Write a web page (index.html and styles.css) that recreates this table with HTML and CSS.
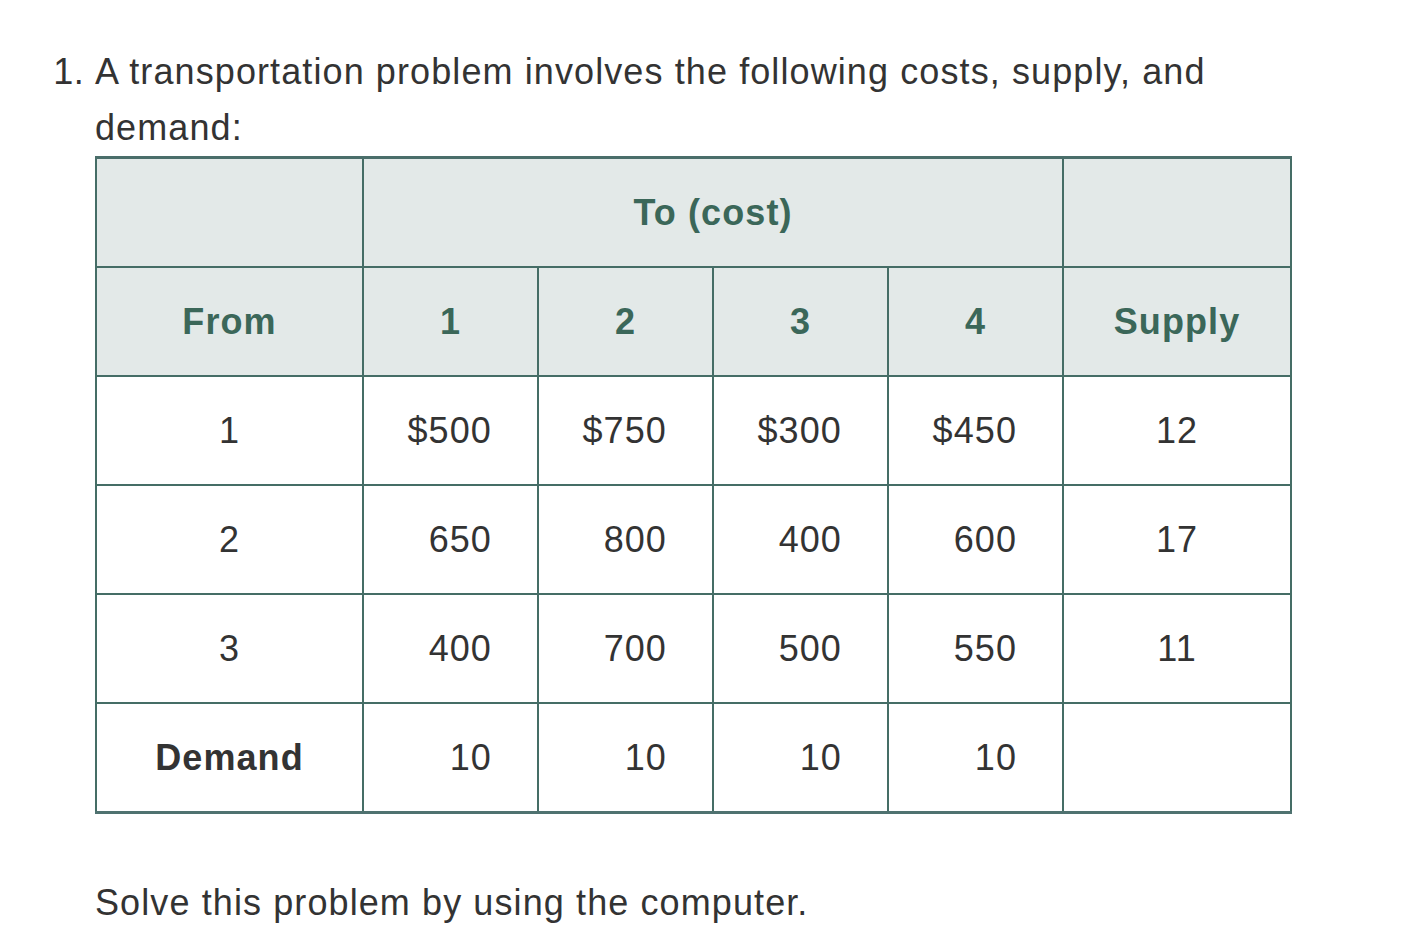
FILE: index.html
```html
<!DOCTYPE html>
<html>
<head>
<meta charset="utf-8">
<link rel="stylesheet" href="styles.css">
</head>
<body>
<ol class="problems">
  <li class="problem">
    <p class="question">A transportation problem involves the following costs, supply, and demand:</p>
    <table class="tp">
      <colgroup>
        <col class="c-from"><col class="c-cost"><col class="c-cost"><col class="c-cost"><col class="c-cost"><col class="c-supply">
      </colgroup>
      <thead>
        <tr class="hd">
          <th></th>
          <th colspan="4">To (cost)</th>
          <th></th>
        </tr>
        <tr class="hd">
          <th>From</th>
          <th>1</th><th>2</th><th>3</th><th>4</th>
          <th>Supply</th>
        </tr>
      </thead>
      <tbody>
        <tr><td class="lbl">1</td><td class="num">$500</td><td class="num">$750</td><td class="num">$300</td><td class="num">$450</td><td class="sup">12</td></tr>
        <tr><td class="lbl">2</td><td class="num">650</td><td class="num">800</td><td class="num">400</td><td class="num">600</td><td class="sup">17</td></tr>
        <tr><td class="lbl">3</td><td class="num">400</td><td class="num">700</td><td class="num">500</td><td class="num">550</td><td class="sup">11</td></tr>
        <tr class="last"><td class="lbl strong">Demand</td><td class="num">10</td><td class="num">10</td><td class="num">10</td><td class="num">10</td><td class="sup"></td></tr>
      </tbody>
    </table>
    <p class="after">Solve this problem by using the computer.</p>
  </li>
</ol>
</body>
</html>
```

FILE: styles.css
```css
html, body {
  margin: 0;
  padding: 0;
  background: #ffffff;
}
body {
  font-family: "Liberation Sans", Arial, Helvetica, sans-serif;
  font-size: 36px;
  letter-spacing: 1.1px;
  color: #333333;
}
.problems {
  margin: 0;
  padding: 44px 0 0 95px;
  width: 1196px;
}
.problem {
  line-height: 56px;
}
.problem::marker {
  letter-spacing: 0.6px;
}
.question {
  margin: 0;
  width: 1196px;
}
.tp {
  border-collapse: collapse;
  table-layout: fixed;
  width: 1196px;
  margin-top: 0;
  line-height: 40px;
  border-top: 3px solid #4a6e6a;
  border-bottom: 3px solid #4f7270;
  border-left: 2px solid #4a6e6a;
  border-right: 2px solid #4a6e6a;
}
.c-from { width: 267px; }
.c-cost { width: 175px; }
.c-supply { width: 228px; }
.tp th, .tp td {
  border: 2px solid #456d66;
  height: 107px;
  padding: 0;
  vertical-align: middle;
}
.tp th {
  background: #e3e9e8;
  color: #3b6759;
  font-weight: bold;
  text-align: center;
}
.tp td.lbl {
  text-align: center;
}
.tp td.strong {
  font-weight: bold;
}
.tp td.num {
  text-align: right;
  padding-right: 45px;
}
.tp td.sup {
  text-align: center;
}
.tp tr.last td {
  border-bottom: 3px solid #4f7270;
}
.after {
  margin: 61px 0 0;
}
```
